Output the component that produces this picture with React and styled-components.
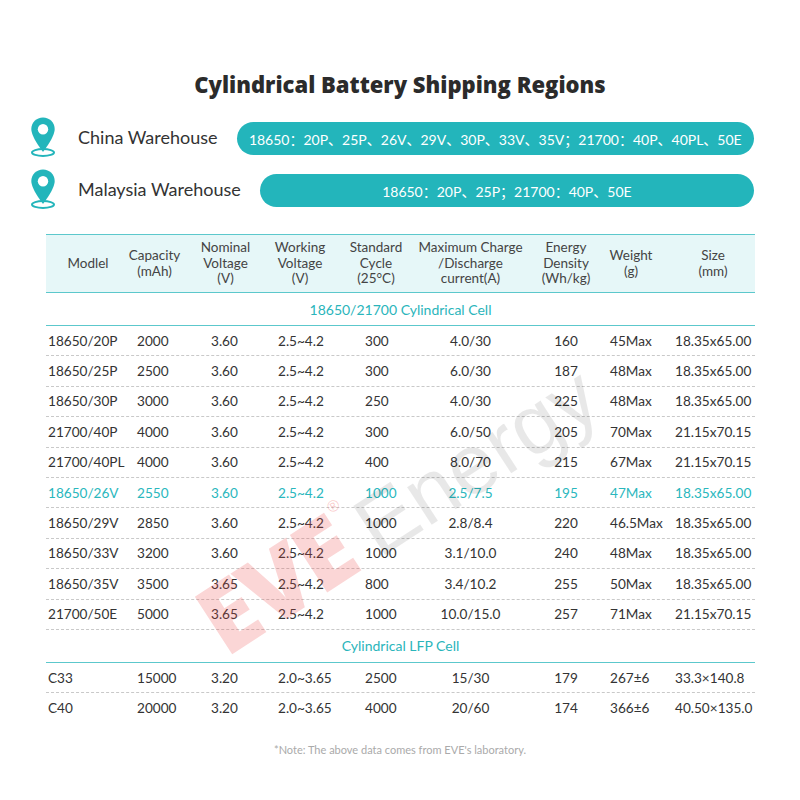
import styled, { createGlobalStyle } from "styled-components";

const TEAL = "#23b5bb";

const GlobalStyle = createGlobalStyle`
	body {
		margin: 0;
		background: #ffffff;
		font-family: "Lato", "Noto Sans CJK SC", sans-serif;
		color: #333333;
	}
`;

const columns = [
	{ w: 74, head: "Modlel", hl: 10, pad: 2 },
	{ w: 69, head: "Capacity\n(mAh)", pad: 17 },
	{ w: 73, head: "Nominal\nVoltage\n(V)", pad: 22 },
	{ w: 76, head: "Working\nVoltage\n(V)", pad: 16 },
	{ w: 85, head: "Standard\nCycle\n(25°C)", hr: 9, pad: 27 },
	{ w: 95, head: "Maximum Charge\n/Discharge\ncurrent(A)", center: true },
	{ w: 80, head: "Energy\nDensity\n(Wh/kg)", hl: 16, center: true, pad: 16 },
	{ w: 73, head: "Weight\n(g)", hr: 7, pad: 12 },
	{ w: 84, head: "Size\n(mm)", pad: 4 },
];

const gridTemplate = columns.map((c) => `${c.w}px`).join(" ");

const cylindrical = [
	["18650/20P", "2000", "3.60", "2.5~4.2", "300", "4.0/30", "160", "45Max", "18.35x65.00"],
	["18650/25P", "2500", "3.60", "2.5~4.2", "300", "6.0/30", "187", "48Max", "18.35x65.00"],
	["18650/30P", "3000", "3.60", "2.5~4.2", "250", "4.0/30", "225", "48Max", "18.35x65.00"],
	["21700/40P", "4000", "3.60", "2.5~4.2", "300", "6.0/50", "205", "70Max", "21.15x70.15"],
	["21700/40PL", "4000", "3.60", "2.5~4.2", "400", "8.0/70", "215", "67Max", "21.15x70.15"],
	["18650/26V", "2550", "3.60", "2.5~4.2", "1000", "2.5/7.5", "195", "47Max", "18.35x65.00", true],
	["18650/29V", "2850", "3.60", "2.5~4.2", "1000", "2.8/8.4", "220", "46.5Max", "18.35x65.00"],
	["18650/33V", "3200", "3.60", "2.5~4.2", "1000", "3.1/10.0", "240", "48Max", "18.35x65.00"],
	["18650/35V", "3500", "3.65", "2.5~4.2", "800", "3.4/10.2", "255", "50Max", "18.35x65.00"],
	["21700/50E", "5000", "3.65", "2.5~4.2", "1000", "10.0/15.0", "257", "71Max", "21.15x70.15"],
];

const lfp = [
	["C33", "15000", "3.20", "2.0~3.65", "2500", "15/30", "179", "267±6", "33.3×140.8"],
	["C40", "20000", "3.20", "2.0~3.65", "4000", "20/60", "174", "366±6", "40.50×135.0"],
];

const warehouses = [
	{ name: "China Warehouse", models: "18650：20P、25P、26V、29V、30P、33V、35V；21700：40P、40PL、50E" },
	{ name: "Malaysia Warehouse", models: "18650：20P、25P；21700：40P、50E" },
];

const PinIcon = () => (
	<svg width="26" height="40" viewBox="0 0 26 40">
		<ellipse cx="13" cy="35.5" rx="11" ry="3.4" fill="none" stroke={TEAL} strokeWidth="2" />
		<path
			d="M13 0.5C6.4 0.5 1.3 5.6 1.3 12.1 1.3 20.4 13 35 13 35S24.7 20.4 24.7 12.1C24.7 5.6 19.6 0.5 13 0.5Z"
			fill={TEAL}
		/>
		<circle cx="13" cy="12.3" r="5.2" fill="#ffffff" />
	</svg>
);

const App = () => {
	const renderRow = (row, last) => {
		const hot = row[9] === true;
		return (
			<DataRow key={row[0]} $last={last}>
				{columns.map((c, i) => (
					<DataCell
						key={i}
						$pad={c.pad || 0}
						$center={c.center}
						$hot={hot}
					>
						{row[i]}
					</DataCell>
				))}
			</DataRow>
		);
	};

	return (
		<Page>
			<GlobalStyle />
			<Title>Cylindrical Battery Shipping Regions</Title>

			<Warehouses>
				{warehouses.map((w) => (
					<WarehouseRow key={w.name}>
						<PinIcon />
						<WarehouseName>{w.name}</WarehouseName>
						<ModelPill>{w.models}</ModelPill>
					</WarehouseRow>
				))}
			</Warehouses>

			<Table>
				<HeadRow>
					{columns.map((c) => (
						<HeadCell key={c.head} $hl={c.hl || 0} $hr={c.hr || 0}>
							<span>{c.head}</span>
						</HeadCell>
					))}
				</HeadRow>

				<SectionRow>18650/21700 Cylindrical Cell</SectionRow>
				{cylindrical.map((r) => renderRow(r, false))}

				<SectionRow>Cylindrical LFP Cell</SectionRow>
				{lfp.map((r, i) => renderRow(r, i === lfp.length - 1))}
			</Table>

			<Note>*Note: The above data comes from EVE's laboratory.</Note>

			<Watermark>
				<WatermarkEve>EVE</WatermarkEve>
				<WatermarkReg>®</WatermarkReg>
				<WatermarkEnergy>Energy</WatermarkEnergy>
			</Watermark>
		</Page>
	);
};

export default App;

const Page = styled.div`
	position: relative;
	width: 800px;
	height: 800px;
	overflow: hidden;
	padding-top: 70px;
	box-sizing: border-box;
`;

const Title = styled.h1`
	margin: 0;
	text-align: center;
	font-family: "Open Sans", sans-serif;
	font-weight: 800;
	font-size: 22px;
	line-height: 28px;
	color: #2b2b2b;
`;

const Warehouses = styled.div`
	display: flex;
	flex-direction: column;
	gap: 12px;
	margin: 19px 46px 0 30px;
`;

const WarehouseRow = styled.div`
	display: flex;
	align-items: center;
	height: 40px;

	svg {
		flex-shrink: 0;
		margin-right: 22px;
	}
`;

const WarehouseName = styled.div`
	font-size: 18px;
	color: #333333;
	white-space: nowrap;
	margin-right: 19px;
`;

const ModelPill = styled.div`
	flex: 1;
	height: 33px;
	border-radius: 17px;
	background: ${TEAL};
	color: #ffffff;
	font-size: 14px;
	display: flex;
	align-items: center;
	justify-content: center;
	white-space: nowrap;
	margin-top: 3px;
`;

const Table = styled.div`
	margin: 25px 45px 0 46px;
	width: 709px;
`;

const HeadRow = styled.div`
	display: grid;
	grid-template-columns: ${gridTemplate};
	height: 59px;
	box-sizing: border-box;
	background: #e6f7f8;
	border-top: 1.5px solid #5cc8cc;
	border-bottom: 1.5px solid #5cc8cc;
`;

const HeadCell = styled.div`
	display: flex;
	flex-direction: column;
	align-items: center;
	justify-content: center;
	padding-left: ${(p) => p.$hl}px;
	padding-right: ${(p) => p.$hr}px;
	font-size: 13.5px;
	line-height: 15.5px;
	color: #444444;

	span {
		white-space: pre;
		text-align: center;
	}
`;

const SectionRow = styled.div`
	height: 33px;
	box-sizing: border-box;
	display: flex;
	align-items: center;
	justify-content: center;
	font-size: 14px;
	color: #2ab5bb;
	border-bottom: 1.5px solid #5cc8cc;
`;

const DataRow = styled.div`
	display: grid;
	grid-template-columns: ${gridTemplate};
	height: 30.4px;
	box-sizing: border-box;
	border-bottom: ${(p) => (p.$last ? "none" : "1px dashed #c9c9c9")};
`;

const DataCell = styled.div`
	display: flex;
	align-items: center;
	justify-content: ${(p) => (p.$center ? "center" : "flex-start")};
	padding-left: ${(p) => p.$pad}px;
	font-size: 13.6px;
	white-space: nowrap;
	color: ${(p) => (p.$hot ? "#2ab7bd" : "#333333")};
`;

const Note = styled.div`
	margin-top: 19px;
	text-align: center;
	font-size: 11px;
	line-height: 14px;
	color: #aaaaaa;
`;

const Watermark = styled.div`
	position: absolute;
	left: 396px;
	top: 505px;
	transform: translate(-50%, -50%) rotate(-33deg);
	white-space: nowrap;
	pointer-events: none;
	font-family: "Liberation Sans", sans-serif;
	font-size: 85px;
	line-height: 1;
	display: flex;
	align-items: baseline;
`;

const WatermarkEve = styled.span`
	font-family: "Open Sans", sans-serif;
	font-weight: 800;
	font-size: 96px;
	letter-spacing: -3px;
	color: rgba(238, 70, 70, 0.22);
`;

const WatermarkReg = styled.span`
	font-size: 16px;
	align-self: flex-start;
	margin: 8px 4px 0 4px;
	color: rgba(236, 60, 60, 0.28);
`;

const WatermarkEnergy = styled.span`
	font-weight: 400;
	color: rgba(0, 0, 0, 0.09);
`;
